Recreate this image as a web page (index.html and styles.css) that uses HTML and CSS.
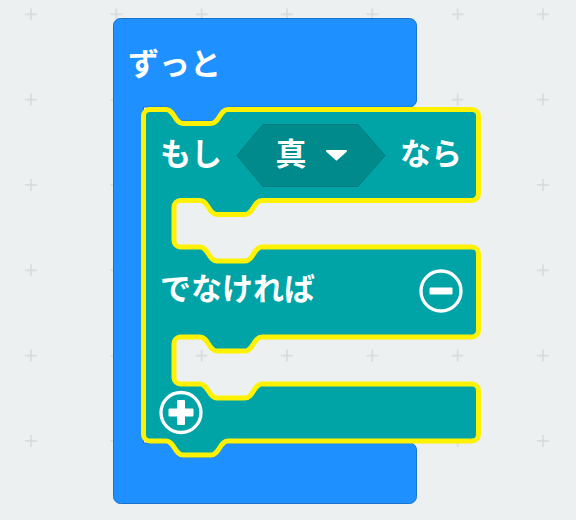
FILE: index.html
```html
<!DOCTYPE html>
<html lang="ja">
<head>
    <meta charset="UTF-8">
    <meta name="viewport" content="width=device-width, initial-scale=1.0">
    <title>ずっと</title>
    <link rel="stylesheet" href="styles.css">
</head>
<body>
    <div class="workspace">
        <svg class="canvas" width="576" height="520" viewBox="0 0 576 520">
            <defs>
                <pattern id="grid" patternUnits="userSpaceOnUse" x="-11.67" y="-28.37" width="85.333" height="85.333">
                    <path class="grid-mark" d="M36.67,42.67 H48.67 M42.67,36.67 V48.67"/>
                </pattern>
            </defs>
            <rect class="grid-bg" width="576" height="520" fill="url(#grid)"/>

            <!-- forever block -->
            <g class="block-forever">
                <path class="forever-shape" d="M113.5,25.5 A7,7 0 0 1 120.5,18.5 H409.5 A7,7 0 0 1 416.5,25.5 V100 A7,7 0 0 1 409.5,107 H228 c-8.5,0 -8.5,14 -17,14 h-28 c-8.5,0 -8.5,-14 -17,-14 H143.5 V443 H166 c8.5,0 8.5,14 17,14 h28 c8.5,0 8.5,-14 17,-14 H409.5 A7,7 0 0 1 416.5,450 V496.5 A7,7 0 0 1 409.5,503.5 H120.5 A7,7 0 0 1 113.5,496.5 Z"/>
                <text class="block-label" x="128" y="75">ずっと</text>
            </g>

            <!-- if / else block (selected) -->
            <g class="block-if">
                <path class="if-shape" d="M143.5,116 A6.5,6.5 0 0 1 150,109.5 H166 c8.5,0 8.5,14 17,14 h28 c8.5,0 8.5,-14 17,-14 H472 A6.5,6.5 0 0 1 478.5,116 V194 A6.5,6.5 0 0 1 472,200.5 H262 c-8.5,0 -8.5,14 -17,14 h-28 c-8.5,0 -8.5,-14 -17,-14 H180.5 A6.5,6.5 0 0 0 174,207 V240.5 A6.5,6.5 0 0 0 180.5,247 H200 c8.5,0 8.5,14 17,14 h28 c8.5,0 8.5,-14 17,-14 H472 A6.5,6.5 0 0 1 478.5,253.5 V330.5 A6.5,6.5 0 0 1 472,337 H262 c-8.5,0 -8.5,14 -17,14 h-28 c-8.5,0 -8.5,-14 -17,-14 H180.5 A6.5,6.5 0 0 0 174,343.5 V377.5 A6.5,6.5 0 0 0 180.5,384 H200 c8.5,0 8.5,14 17,14 h28 c8.5,0 8.5,-14 17,-14 H472 A6.5,6.5 0 0 1 478.5,390.5 V434.5 A6.5,6.5 0 0 1 472,441 H228 c-8.5,0 -8.5,14 -17,14 h-28 c-8.5,0 -8.5,-14 -17,-14 H150 A6.5,6.5 0 0 1 143.5,434.5 Z"/>

                <text class="block-label" x="160" y="165">もし</text>

                <g class="dropdown">
                    <polygon class="dropdown-shape" points="237,155.5 263,124.5 358,124.5 385,155.5 358,186.5 263,186.5"/>
                    <text class="block-label" x="275.5" y="165">真</text>
                    <polygon class="dropdown-arrow" points="327,151 346,151 336.5,159.5"/>
                </g>

                <text class="block-label" x="400" y="165">なら</text>

                <text class="block-label" x="160" y="300">でなければ</text>

                <g class="mutator-btn">
                    <circle class="mutator-ring" cx="441" cy="291" r="20"/>
                    <rect class="mutator-mark" x="429.5" y="287.5" width="23" height="7" rx="1"/>
                </g>

                <g class="mutator-btn">
                    <circle class="mutator-ring" cx="181" cy="412.5" r="20"/>
                    <rect class="mutator-mark" x="168.5" y="408.5" width="25" height="8" rx="1"/>
                    <rect class="mutator-mark" x="177" y="400" width="8" height="25" rx="1"/>
                </g>
            </g>
        </svg>
    </div>
</body>
</html>
```

FILE: styles.css
```css
body {
    margin: 0;
    background-color: #ecf0f1;
}
.workspace {
    width: 576px;
    height: 520px;
    overflow: hidden;
}
.canvas {
    display: block;
}
.grid-mark {
    stroke: #d5d9db;
    stroke-width: 1.5;
    fill: none;
}
.forever-shape {
    fill: #1e90ff;
    stroke: #1a72cc;
    stroke-width: 1;
}
.if-shape {
    fill: #00a4a6;
    stroke: #fff200;
    stroke-width: 5;
    stroke-linejoin: round;
}
.block-label {
    fill: #fff;
    font-family: "Noto Sans CJK JP", "Noto Sans", sans-serif;
    font-weight: 700;
    font-size: 31px;
}
.dropdown-shape {
    fill: #008a8c;
    stroke: #007a7c;
    stroke-width: 1;
}
.dropdown-arrow {
    fill: #fff;
    stroke: #fff;
    stroke-width: 2;
    stroke-linejoin: round;
}
.mutator-ring {
    fill: none;
    stroke: #fff;
    stroke-width: 3.3;
}
.mutator-mark {
    fill: #fff;
}
```
